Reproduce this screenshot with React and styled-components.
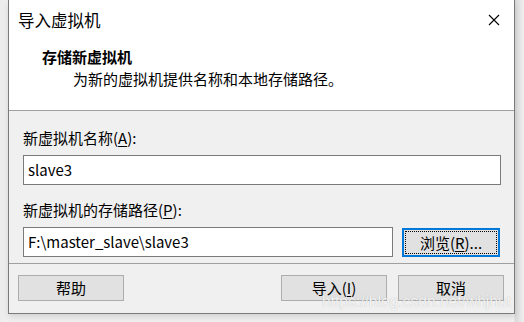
import React from "react";
import styled, { createGlobalStyle } from "styled-components";

const Global = createGlobalStyle`
  html, body { margin: 0; padding: 0; }
  body {
    width: 524px; height: 322px; overflow: hidden;
    background: #f0f0f0;
    font-family: "Noto Sans CJK SC", "Noto Sans", sans-serif;
  }
`;

const Stage = styled.div`
  position: relative;
  width: 524px;
  height: 322px;
  padding-left: 8px;
  box-sizing: border-box;
  overflow: hidden;
  background: linear-gradient(to right, #ececec 0, #f0f0f0 8px, #f0f0f0 514px, #d9d9d9 515px, #efefef 524px);
`;

const Window = styled.div`
  width: 507px;
  height: 314px;
  box-sizing: border-box;
  border: 1px solid #7a7a7a;
  border-top: none;
  background: #f0f0f0;
  display: flex;
  flex-direction: column;
  box-shadow: 0 3px 6px rgba(0,0,0,0.12);
`;

const Header = styled.div`
  height: 110px;
  background: #ffffff;
  border-bottom: 1px solid #a0a0a0;
  display: flex;
  flex-direction: column;
`;

const TitleBar = styled.div`
  height: 40px;
  display: flex;
  align-items: center;
  justify-content: space-between;
  padding-left: 9px;
  padding-right: 14px;
`;

const Title = styled.span`
  font-size: 16.5px;
  line-height: 20px;
  color: #000;
`;

const Close = styled.svg`
  width: 12px;
  height: 12px;
`;

const Heading = styled.div`
  padding-left: 33px;
  margin-top: 6px;
  font-size: 15px;
  font-weight: 700;
  line-height: 22px;
  color: #000;
`;

const SubHeading = styled.div`
  padding-left: 64px;
  font-size: 15px;
  line-height: 22px;
  color: #000;
`;

const Body = styled.div`
  height: 153px;
  padding: 16px 12px 0 14px;
  box-sizing: border-box;
  border-bottom: 1px solid #a0a0a0;
  display: flex;
  flex-direction: column;
`;

const Label = styled.div`
  font-size: 15px;
  line-height: 22px;
  height: 22px;
  color: #000;
  margin-bottom: ${p => p.$gap}px;
  u { text-decoration: underline; text-underline-offset: 2px; }
`;

const Row = styled.div`
  display: flex;
  align-items: center;
  gap: 9px;
  margin-bottom: ${p => p.$gap || 0}px;
`;

const Input = styled.div`
  width: ${p => p.$w}px;
  height: 30px;
  box-sizing: border-box;
  border: 1px solid #7a7a7a;
  background: #fff;
  font-size: 15px;
  line-height: 28px;
  padding-left: 4px;
  color: #000;
  white-space: nowrap;
`;

const Button = styled.div`
  width: ${p => p.$w}px;
  height: ${p => p.$h}px;
  box-sizing: border-box;
  background: #e1e1e1;
  border: ${p => (p.$focus ? "2px solid #0078d7" : "1px solid #adadad")};
  display: flex;
  align-items: center;
  justify-content: center;
  font-size: 15px;
  color: #000;
  position: relative;
  u { text-decoration: underline; text-underline-offset: 2px; }
`;

const FocusRing = styled.span`
  position: absolute;
  inset: 1px;
  border: 1px dotted #000;
`;

const Footer = styled.div`
  flex: 1;
  display: flex;
  align-items: center;
  padding: 0 10px 0 9px;
  padding-bottom: 2px;
`;

const Spacer = styled.div`
  flex: 1;
`;

const ButtonGroup = styled.div`
  display: flex;
  gap: 11px;
`;

const Watermark = styled.div`
  position: absolute;
  left: 322px;
  top: 293px;
  font-family: "Liberation Sans", Arial, sans-serif;
  font-size: 15.6px;
  color: rgba(255,255,255,0.85);
  text-shadow: 0 0 1px rgba(0,0,0,0.25);
  white-space: nowrap;
  pointer-events: none;
`;

export default function App() {
  return (
    <>
      <Global />
      <Stage>
        <Window>
          <Header>
            <TitleBar>
              <Title>导入虚拟机</Title>
              <Close viewBox="0 0 12 12">
                <path d="M1 1 L11 11 M11 1 L1 11" stroke="#000" strokeWidth="1.1" />
              </Close>
            </TitleBar>
            <Heading>存储新虚拟机</Heading>
            <SubHeading>为新的虚拟机提供名称和本地存储路径。</SubHeading>
          </Header>
          <Body>
            <Label $gap={6}>新虚拟机名称(<u>A</u>):</Label>
            <Row $gap={14}>
              <Input $w={478}>slave3</Input>
            </Row>
            <Label $gap={6}>新虚拟机的存储路径(<u>P</u>):</Label>
            <Row>
              <Input $w={370}>F:\master_slave\slave3</Input>
              <Button $w={98} $h={29} $focus>
                <FocusRing />
                浏览(<u>R</u>)...
              </Button>
            </Row>
          </Body>
          <Footer>
            <Button $w={106} $h={26}>帮助</Button>
            <Spacer />
            <ButtonGroup>
              <Button $w={106} $h={26}>导入(<u>I</u>)</Button>
              <Button $w={106} $h={26}>取消</Button>
            </ButtonGroup>
          </Footer>
        </Window>
        <Watermark>https://blog.csdn.net/whjhut</Watermark>
      </Stage>
    </>
  );
}
